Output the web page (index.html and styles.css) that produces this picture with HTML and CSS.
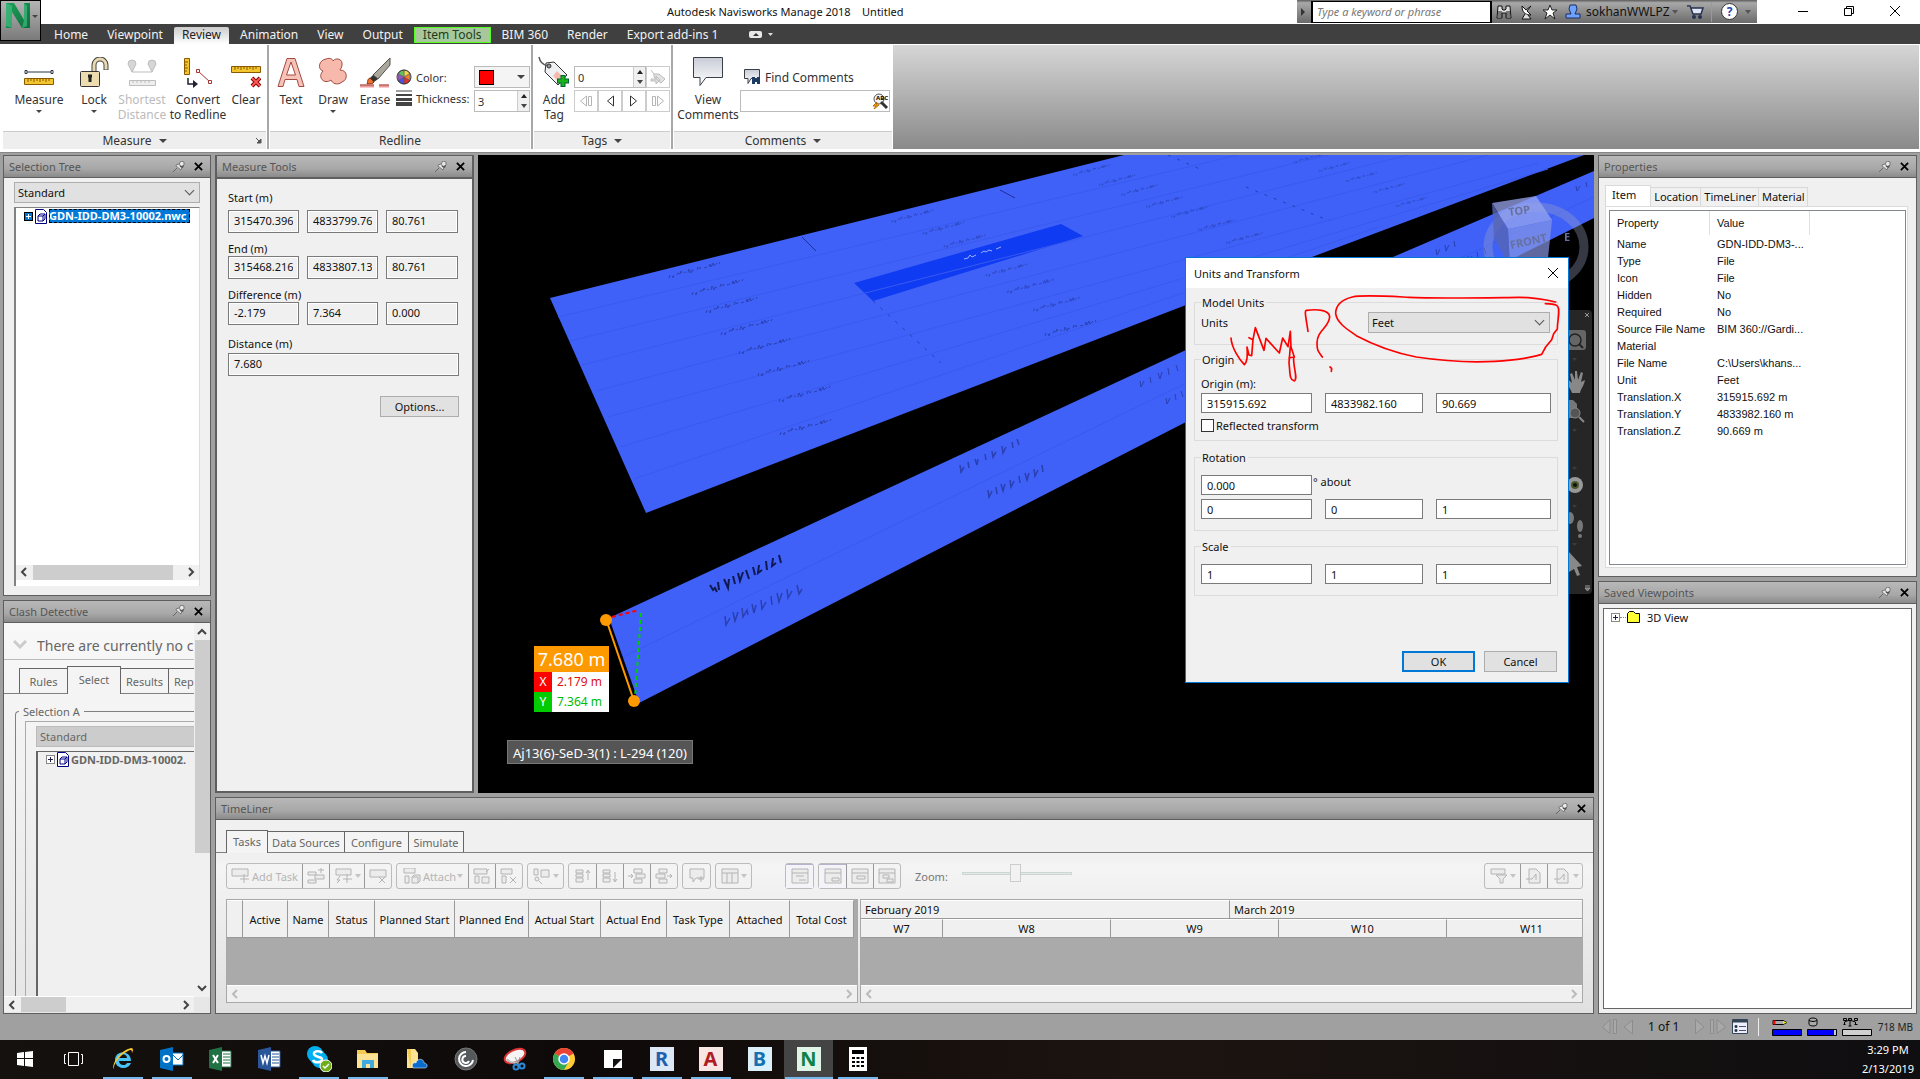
FILE: index.html
```html
<!DOCTYPE html>
<html lang="en">
<head>
<meta charset="utf-8">
<title>Autodesk Navisworks Manage 2018</title>
<link rel="stylesheet" href="styles.css">
</head>
<body>
<svg class="defs" aria-hidden="true">
  <defs>
    <linearGradient id="nGreen" x1="0" y1="0" x2="1" y2="1"><stop offset="0" stop-color="#1fa35a"/><stop offset="1" stop-color="#0b6e3c"/></linearGradient>
    <linearGradient id="bubble" x1="0" y1="0" x2="0" y2="1"><stop offset="0" stop-color="#c8ccd6"/><stop offset="1" stop-color="#fff"/></linearGradient>
  </defs>
  <symbol id="pin" viewBox="0 0 12 12"><path d="M0 11l4-4" stroke="#666" fill="none"/><path d="M3 5l5 4 1-3 2-2V1L8 0 6 3 3 4z" fill="#e8e8e8" stroke="#777"/><path d="M6 2l1 4 3 1 1-3-3 1z" fill="#555"/></symbol>
  <symbol id="cross" viewBox="0 0 10 10"><path d="M1 1l8 8M9 1l-8 8" stroke="#000" stroke-width="2" fill="none"/></symbol>
  <symbol id="nwc" viewBox="0 0 12 15"><path d="M.5.5h8l3 3v11H.5z" fill="#fff" stroke="#000080"/><path d="M3 7h5v5H3zM3 7l2-2h5v5l-2 2M8 7l2-2" fill="none" stroke="#000080"/></symbol>
  <symbol id="ruler" viewBox="0 0 30 8"><path d="M.5.5h29v6H.5z" fill="#f3c52f" stroke="#8a5a00"/><path d="M4 1v3M7 1v2M10 1v3M13 1v2M16 1v3M19 1v2M22 1v3M25 1v2" stroke="#8a5a00"/></symbol>
  <symbol id="less" viewBox="0 0 8 10"><path d="M6 1L2 5l4 4" fill="none" stroke="currentColor" stroke-width="2"/></symbol>
  <symbol id="more" viewBox="0 0 8 10"><path d="M2 1l4 4-4 4" fill="none" stroke="currentColor" stroke-width="2"/></symbol>
  <symbol id="scrawl" viewBox="-30 -10 60 20" overflow="visible"><path d="M-25 8l1-3M-22 6l1 2 1-3M-17 5l1-2 2 1 1-3 1 2M-10 3l2-1M-6 3l1-4 2 4 1-3 2 1M3 0l1-3 2 2 1-2M10-2l3-1M15-3l1-3 1 3 2-4 1 3 3-3M25-6l1-2" fill="none" stroke="#24379c" stroke-width="1"/></symbol>
</svg>

<div class="app">
  <header class="titlebar">
    <h1 class="window-title">Autodesk Navisworks Manage 2018 &nbsp;&nbsp; Untitled</h1>
    <div class="infocenter">
      <span class="tri-right"></span>
      <input class="keyword" type="text" aria-label="Search" placeholder="Type a keyword or phrase">
      <svg width="16" height="16" viewBox="0 0 16 16"><path d="M2 2h4v3l1 1h2l1-1V2h4l1 12h-5V9H6v5H1z" fill="#ddd" stroke="#111"/><path d="M3 7v6M5 7v6M11 7v6M13 7v6" stroke="#111"/></svg>
      <svg width="16" height="16" viewBox="0 0 16 16"><path d="M3 2c0 6 3 9 9 9L8 7l4-5-5 4z" fill="#fff" stroke="#111"/><path d="M6 10l-3 5h9l-3-4" fill="#ddd" stroke="#111"/></svg>
      <svg width="16" height="16" viewBox="0 0 16 16"><path d="M8 1l2 5h5l-4 3 2 6-5-4-5 4 2-6-4-3h5z" fill="#fff" stroke="#222"/></svg>
      <svg width="16" height="16" viewBox="0 0 16 16"><path d="M5 1h6l1 4-2 5h5v4H1v-4h5L4 5z" fill="#6ea2ff" stroke="#1b2f66"/></svg>
      <a class="user" href="#">sokhanWWLPZ</a>
      <span class="tri-down dim"></span>
      <svg class="cart" width="17" height="16" viewBox="0 0 17 16"><path d="M0 2h3l3 8h8l2-6H4" fill="#dfe6f5" stroke="#26324f" stroke-width="1.5"/><circle cx="7" cy="13" r="2" fill="#26324f"/><circle cx="13" cy="13" r="2" fill="#26324f"/></svg>
      <span class="rule"></span>
      <button class="help" type="button">?</button>
      <span class="tri-down dim"></span>
    </div>
    <div class="window-buttons">
      <button type="button" aria-label="Minimize"><svg width="12" height="12"><path d="M1 6.500h10" stroke="#000"/></svg></button>
      <button type="button" aria-label="Restore"><svg width="12" height="12"><path d="M1.500 3.500h7v7h-7zM3.500 3V1.500h7v7H9" fill="none" stroke="#000"/></svg></button>
      <button type="button" aria-label="Close"><svg width="12" height="12"><path d="M1 1l10 10M11 1L1 11" stroke="#000"/></svg></button>
    </div>
  </header>

  <button class="app-button" type="button" aria-label="Application menu">
    <svg width="26" height="28" viewBox="0 0 26 28"><path d="M1 1h8l10 17V1h6v25h-8L7 10v16H1z" fill="url(#nGreen)"/><path d="M1 1l6 3v22l-6-2zM19 1l3 3v20l-5 2 2-8z" fill="#4cc38a" opacity=".6"/></svg>
    <span class="tri-down small"></span>
  </button>

  <nav class="tabs">
    <a href="#">Home</a><a href="#">Viewpoint</a><a class="active" href="#">Review</a><a href="#">Animation</a><a href="#">View</a><a href="#">Output</a><a class="context" href="#">Item Tools</a><a href="#">BIM 360</a><a href="#">Render</a><a href="#">Export add-ins 1</a>
    <svg class="collapse" width="26" height="8" viewBox="0 0 26 8"><rect width="13" height="7" rx="2" fill="#e8e8e8"/><path d="M4 5l3-3 3 3z" fill="#333"/><path d="M19 2h5l-2.500 3z" fill="#ddd"/></svg>
  </nav>

  <section class="ribbon">
    <div class="group g-measure">
      <div class="tools">
        <button class="tool w62" type="button"><svg width="30" height="32" viewBox="0 0 30 32"><path d="M2 15h26" stroke="#2b3440"/><path d="M1 13.500h2v3H1zM27 13.500h2v3h-2z" fill="#fff" stroke="#2b3440"/><use href="#ruler" y="21" width="30" height="8"/></svg><span>Measure</span><i class="tri-down small"></i></button>
        <button class="tool w48" type="button"><svg width="30" height="32" viewBox="0 0 30 32"><path d="M15 14V8a6 6 0 0 1 12 0v5" fill="none" stroke="#444" stroke-width="5"/><path d="M15 14V8a6 6 0 0 1 12 0v4.500" fill="none" stroke="#e8d9b0" stroke-width="3"/><rect x="1.500" y="14.500" width="19" height="15" rx="1" fill="#ecdcae" stroke="#333"/><path d="M9 19h4M11 19v6" stroke="#222" stroke-width="3"/></svg><span>Lock</span><i class="tri-down small"></i></button>
        <button class="tool w48" type="button" disabled><svg width="30" height="32" viewBox="0 0 30 32"><g fill="#d6d6d6" stroke="#bdbdbd"><path d="M5 15L1 7a4 4 0 0 1 8 0zM25 15l-4-8a4 4 0 0 1 8 0z"/><path d="M5 15h20"/><path d="M2.500 23.500h26v5h-26z" fill="#eee"/><path d="M6 24v2M10 24v2M14 24v2M18 24v2M22 24v2"/></g></svg><span>Shortest<br>Distance</span></button>
        <button class="tool w64" type="button"><svg width="30" height="32" viewBox="0 0 30 32"><path d="M1.500 1.500h5v16h-5z" fill="#f3c52f" stroke="#8a5a00"/><path d="M2 5h3M2 8h2M2 11h3M2 14h2" stroke="#8a5a00"/><path d="M5 21v6h6" fill="none" stroke="#223" stroke-width="1.500"/><path d="M10 23l5 4-5 4z" fill="#223"/><path d="M15 14l12 11" stroke="#a33"/><path d="M13.500 12.500h3v3h-3zM25.500 23.500h3v3h-3z" fill="#fff" stroke="#a33"/></svg><span>Convert<br>to Redline</span></button>
        <button class="tool w32" type="button"><svg width="30" height="32" viewBox="0 0 30 32"><use href="#ruler" y="9" width="30" height="8"/><path d="M21 21l8 8M29 21l-8 8" stroke="#7a0000" stroke-width="4"/><path d="M21 21l8 8M29 21l-8 8" stroke="#f55" stroke-width="2"/></svg><span>Clear</span></button>
      </div>
      <h2 class="caption">Measure<i class="tri-down"></i><svg class="launcher" width="7" height="7"><path d="M1 1l4 4M6 2v4H2z" stroke="#555" fill="#555"/></svg></h2>
    </div>
    <div class="group g-redline">
      <div class="tools">
        <button class="tool w42" type="button"><svg width="28" height="32" viewBox="0 0 28 32"><path fill-rule="evenodd" d="M1 29.500L10 1.500h8l9 28h-5l-2-7H8l-2 7zM9.500 18h9L14 5z" fill="#f7c3b8" stroke="#a24b43"/></svg><span>Text</span></button>
        <button class="tool w42" type="button"><svg width="30" height="32" viewBox="0 0 30 32"><path d="M8 2c5-2 7 1 7 2 3-4 10-2 9 4 0 3-2 4-2 5 8 0 8 10 2 12-5 4-10 1-11-2-7 5-14-3-8-9C-1 12 1 3 8 2z" fill="#f7b9ac" stroke="#a24b43"/></svg><span>Draw</span><i class="tri-down small"></i></button>
        <button class="tool w42" type="button"><svg width="32" height="32" viewBox="0 0 32 32"><path d="M31 1L14 18l5 4L31 8z" fill="#aaa79c" stroke="#55524c"/><path d="M14 18l-3 3 4 4 4-3z" fill="#333"/><path d="M11 21c-3 1-2 4-3 6 3 0 6 0 7-2z" fill="#f0702c" stroke="#7a3010"/><path d="M1 29h14M20 29h10" stroke="#e99" stroke-width="3"/><path d="M1 28h14M20 28h10" stroke="#a24b43"/></svg><span>Erase</span></button>
        <div class="redline-form">
          <label for="rl-color"><svg width="16" height="16" viewBox="-8 -8 16 16"><g stroke="#555" stroke-width=".5"><path d="M0 0V-7A7 7 0 0 1 6-3.500z" fill="#f4d94a"/><path d="M0 0l6-3.500v7z" fill="#f08030"/><path d="M0 0l6 3.500A7 7 0 0 1 0 7z" fill="#e03030"/><path d="M0 0v7a7 7 0 0 1-6-3.500z" fill="#5050e0"/><path d="M0 0l-6 3.500v-7z" fill="#a050c0"/><path d="M0 0l-6-3.500A7 7 0 0 1 0-7z" fill="#60c060"/></g><circle r="7" fill="none" stroke="#333"/></svg>Color:</label>
          <button id="rl-color" class="swatch" type="button" aria-label="Red"><b></b><i class="tri-down"></i></button>
          <label class="thick" for="rl-thick"><svg width="16" height="16"><path d="M0 1h16" stroke="#444"/><path d="M0 5h16" stroke="#444" stroke-width="2"/><path d="M0 9.500h16" stroke="#444" stroke-width="3"/><path d="M0 14h16" stroke="#444" stroke-width="4"/></svg>Thickness:</label>
          <span class="spin"><input id="rl-thick" type="text" value="3"><span class="spin-arrows"><i class="tri-up"></i><i class="tri-down"></i></span></span>
        </div>
      </div>
      <h2 class="caption">Redline</h2>
    </div>
    <div class="group g-tags">
      <div class="tools">
        <button class="tool w42" type="button"><svg width="32" height="32" viewBox="0 0 32 32"><path d="M8 6l8-1 13 13-9 10L7 15z" fill="#eef0f4" stroke="#333"/><path d="M19 14l5 5-4 5-5-5z" fill="#f7b9ac"/><circle cx="11" cy="9" r="2" fill="#999" stroke="#333"/><path d="M1 0c1 6 4 8 9 9" fill="none" stroke="#555" stroke-width="1.500"/><path d="M25 18v12M19 24h12" stroke="#063" stroke-width="5"/><path d="M25 19v10M20 24h10" stroke="#1bb31b" stroke-width="3"/></svg><span>Add<br>Tag</span></button>
        <div class="tag-form">
          <span class="spin tagnum"><input type="text" value="0" aria-label="Tag number"><span class="spin-arrows"><i class="tri-up"></i><i class="tri-down"></i></span></span>
          <button type="button" disabled aria-label="Go to tag"><svg width="16" height="16" viewBox="0 0 16 16"><path d="M4 5h5l6 5-4 4-7-6zM1 1l3 4M1 10h5V7l4 4-4 4v-3H1z" fill="#e2e2e2" stroke="#bbb"/></svg></button>
          <button type="button" disabled aria-label="First tag"><svg width="14" height="12"><path d="M7.500 1v10l-6-5zM9.500 1.500h3v9h-3z" fill="#fff" stroke="#b5b5b5"/></svg></button>
          <button type="button" aria-label="Previous tag"><svg width="10" height="12"><path d="M8.500 1v10l-6-5z" fill="#fff" stroke="#333"/></svg></button>
          <button type="button" aria-label="Next tag"><svg width="10" height="12"><path d="M1.500 1v10l6-5z" fill="#fff" stroke="#333"/></svg></button>
          <button type="button" disabled aria-label="Last tag"><svg width="14" height="12"><path d="M6.500 1v10l6-5zM1.500 1.500h3v9h-3z" fill="#fff" stroke="#b5b5b5"/></svg></button>
        </div>
      </div>
      <h2 class="caption">Tags<i class="tri-down"></i></h2>
    </div>
    <div class="group g-comments">
      <div class="tools">
        <button class="tool w64" type="button"><svg width="32" height="32" viewBox="0 0 32 32"><path d="M1.500.500h29v20H14l-6 8v-8H1.500z" fill="url(#bubble)" stroke="#3a3f4a"/></svg><span>View<br>Comments</span></button>
        <div class="comment-form">
          <button class="find" type="button"><svg width="17" height="17" viewBox="0 0 17 17"><path d="M.5.500h15v9H7l-3 5v-5H.5z" fill="url(#bubble)" stroke="#3a3f4a"/><path d="M8 8h3v2h2V8h3v7h-3v-2h-2v2H8z" fill="#1c3c66"/></svg>Find Comments</button>
          <div class="quick"><input type="text" aria-label="Quick find comments"><svg width="17" height="17" viewBox="0 0 17 17"><circle cx="7" cy="6" r="5" fill="#f4f4f4" stroke="#555"/><path d="M9 9l6 6" stroke="#333" stroke-width="3"/><path d="M5 9l-4 4h3l-2 3 5-4H4z" fill="#fb1" stroke="#b60"/><text x="4" y="7" class="abc">ABC</text></svg></div>
        </div>
      </div>
      <h2 class="caption">Comments<i class="tri-down"></i></h2>
    </div>
    <div class="ribbon-fill"></div>
  </section>

  <main class="workspace">
    <div class="dock dock-left">
      <section class="panel selection">
        <header class="panel-head"><h2>Selection Tree</h2><svg class="pin"><use href="#pin"/></svg><button type="button" aria-label="Close"><svg><use href="#cross"/></svg></button></header>
        <div class="panel-body selection-body">
          <span class="select"><select aria-label="Tree view"><option>Standard</option></select></span>
          <div class="tree">
            <ul><li class="picked"><span class="plus on"></span><svg width="12" height="15"><use href="#nwc"/></svg><span class="node">GDN-IDD-DM3-10002.nwc</span></li></ul>
            <div class="hscroll"><svg><use href="#less"/></svg><span class="track"><b class="thumb-tree"></b></span><svg><use href="#more"/></svg></div>
          </div>
        </div>
      </section>
      <section class="panel clash">
        <header class="panel-head"><h2>Clash Detective</h2><svg class="pin"><use href="#pin"/></svg><button type="button" aria-label="Close"><svg><use href="#cross"/></svg></button></header>
        <div class="panel-body clash-body">
          <div class="clash-view">
            <p class="notice"><svg width="14" height="10"><path d="M1 1l6 6 6-6" fill="none" stroke="#ccc" stroke-width="3"/></svg><span>There are currently no c</span></p>
            <div class="boxtabs clash-tabs"><a href="#" class="w49">Rules</a><a href="#" class="w54 active">Select</a><a href="#" class="w49">Results</a><a href="#" class="w49 cut">Rep</a></div>
            <fieldset class="selection-a"><legend>Selection A</legend>
              <div class="inner"><div class="bar">Standard</div>
                <ul class="clash-tree"><li><span class="plus"></span><svg width="12" height="15"><use href="#nwc"/></svg><span class="node">GDN-IDD-DM3-10002.</span></li></ul>
              </div>
            </fieldset>
          </div>
          <div class="vscroll"><svg class="up"><use href="#less"/></svg><span class="track"><b></b></span><svg class="down"><use href="#less"/></svg></div>
          <div class="hscroll"><svg><use href="#less"/></svg><span class="track"><b class="thumb-clash"></b></span><svg><use href="#more"/></svg></div>
        </div>
      </section>
    </div>

    <div class="center">
      <section class="panel measure">
        <header class="panel-head"><h2>Measure Tools</h2><svg class="pin"><use href="#pin"/></svg><button type="button" aria-label="Close"><svg><use href="#cross"/></svg></button></header>
        <form class="panel-body measure-body">
          <fieldset class="row3 first"><legend>Start (m)</legend><input aria-label="Start X" value="315470.396" readonly><input aria-label="Start Y" value="4833799.760" readonly><input aria-label="Start Z" value="80.761" readonly></fieldset>
          <fieldset class="row3"><legend>End (m)</legend><input aria-label="End X" value="315468.216" readonly><input aria-label="End Y" value="4833807.13" readonly><input aria-label="End Z" value="80.761" readonly></fieldset>
          <fieldset class="row3"><legend>Difference (m)</legend><input aria-label="Difference X" value="-2.179" readonly><input aria-label="Difference Y" value="7.364" readonly><input aria-label="Difference Z" value="0.000" readonly></fieldset>
          <label class="distance">Distance (m)<input value="7.680" readonly></label>
          <button class="push" type="button">Options...</button>
        </form>
      </section>

      <section class="viewport">
        <svg class="scene" viewBox="0 0 1116 638" preserveAspectRatio="xMinYMin slice">
          <path d="M72 143L646 0h460L834 102 708 150 168 358z" fill="#3f61f8"/>
          <path d="M131 463L708 195 915 102 1116 16v47L708 267 161 548z" fill="#3f61f8"/>
          <path d="M376 128l207-59 22 12-210 65z" fill="#0f3bf2"/>
          <g fill="none" stroke="#3a5aee" stroke-width="1">
            <path d="M80 162L760 0M92 186L850 0M104 210L930 0M118 236L1010 0M130 262L1060 8M142 292L1070 14M156 324L900 72"/>
            <path d="M145 502L708 228 1116 42"/>
          </g>
          <g fill="none" stroke="#1d2f9a" stroke-dasharray="3 7"><path d="M395 146l68 62M690 0l34 15M768 32l84 34" opacity=".7"/><path d="M324 82l14 14M522 35l15 8" stroke-dasharray="none"/></g>
          <g opacity=".7">
            <use href="#scrawl" x="186" y="105" width="60" height="20"/><use href="#scrawl" x="209" y="122" width="60" height="20"/><use href="#scrawl" x="223" y="140" width="60" height="20"/><use href="#scrawl" x="238" y="162" width="60" height="20"/><use href="#scrawl" x="256" y="181" width="60" height="20"/><use href="#scrawl" x="275" y="203" width="60" height="20"/><use href="#scrawl" x="296" y="229" width="60" height="20"/><use href="#scrawl" x="297" y="262" width="60" height="20"/>
            <use href="#scrawl" x="410" y="53" width="48" height="16"/><use href="#scrawl" x="441" y="65" width="48" height="16"/><use href="#scrawl" x="462" y="78" width="48" height="16"/><use href="#scrawl" x="504" y="107" width="48" height="16"/><use href="#scrawl" x="525" y="122" width="54" height="18"/><use href="#scrawl" x="551" y="140" width="54" height="18"/><use href="#scrawl" x="562" y="163" width="60" height="20"/>
            <use href="#scrawl" x="592" y="8" width="42" height="14"/><use href="#scrawl" x="618" y="18" width="42" height="14"/><use href="#scrawl" x="640" y="28" width="42" height="14"/><use href="#scrawl" x="665" y="40" width="42" height="14"/><use href="#scrawl" x="690" y="50" width="42" height="14"/><use href="#scrawl" x="717" y="63" width="42" height="14"/><use href="#scrawl" x="745" y="76" width="42" height="14"/>
            <use href="#scrawl" x="813" y="-3" width="36" height="12"/><use href="#scrawl" x="838" y="6" width="36" height="12"/><use href="#scrawl" x="865" y="16" width="36" height="12"/><use href="#scrawl" x="893" y="27" width="36" height="12"/><use href="#scrawl" x="915" y="41" width="36" height="12"/>
          </g>
          <path d="M486 104l4-1 2-3 2 2 4-2M503 98l3-2 2 1 3-2 3 1M518 94l5-2" fill="none" stroke="#9db0ff"/>
          <g fill="none" stroke="#2a3fb0">
            <path d="M232 430l3 5 2-2 2 4M240 427l1 8M246 424l4 9 1-9M255 421l2 8M260 418l2 8 3-9M268 415l3 9M275 412l2 8M281 410l-1 8 4-3M288 406l1 9M295 403l-1 8 4-3M301 400l2 8" stroke="#101a52" stroke-width="2"/>
            <path d="M247 461l1 9 4-7M255 457l2 9 3-9M264 453l1 9 4-7 1 5M274 449l2 9 2-8M283 445l1 9 4-7M293 441l1 9M299 438l2 9 3-9M309 434l1 9 4-7M319 430l2 9 3-5" stroke-width="1.500"/>
            <path d="M482 310l1 7 3-5M490 307l1 6M497 304l2 6 1-6M507 299l1 6M514 296l1 6 3-5M524 291l1 7 3-6M534 287l1 6M539 284l2 6" stroke-width="1.500"/>
            <path d="M510 335l1 7 3-6M518 332l1 7M523 329l2 7 2-7M532 325l1 7 3-6M541 321l1 7M547 318l2 7 2-7M556 314l1 7 3-6M564 310l1 7" stroke-width="1.500"/>
            <path d="M662 226l1 6 3-6M672 222l1 6M680 218l2 6 2-7M690 213l1 7M698 210l2 6M688 243l1 6 3-6M697 239l1 6M703 236l2 6M958 94l1 6 3-6M967 90l1 6 3-6M976 86l1 6M990 101l1 6 3-6M999 97l1 6M1006 93l2 6M1098 31l1 5 3-5M1108 27l1 5"/>
          </g>
          <g>
            <ellipse cx="1058" cy="92" rx="48" ry="40" fill="none" stroke="#9aa2c4" stroke-width="9" opacity=".35"/>
            <path d="M1014 48l44-7 16 24-44 9z" fill="#98a6ee" opacity=".75"/>
            <path d="M1030 74l44-9-4 38-38 8z" fill="#8795e4" opacity=".7"/>
            <path d="M1014 48l16 26 2 37-16-28z" fill="#5865b4" opacity=".8"/>
            <g class="cube-text"><text x="1031" y="61" transform="rotate(-8 1031 61)">TOP</text><text x="1033" y="94" transform="rotate(-12 1033 94)">FRONT</text><text x="1086" y="86">E</text></g>
          </g>
          <path d="M128 464l28 82" stroke="#f90" stroke-width="2"/>
          <path d="M134 462l27-7" stroke="#f00" stroke-width="2" stroke-dasharray="4 3"/>
          <path d="M163 458l-6 84" stroke="#0c0" stroke-width="2" stroke-dasharray="4 3"/>
          <circle cx="128" cy="465" r="6" fill="#f90"/><circle cx="156" cy="546" r="6" fill="#f90"/>
        </svg>
        <dl class="reading"><dt class="total">7.680 m</dt><dd><b class="x">X</b><span>2.179 m</span></dd><dd class="green"><b class="y">Y</b><span>7.364 m</span></dd></dl>
        <p class="tooltip">Aj13(6)-SeD-3(1) : L-294 (120)</p>
        <div class="navbar">
          <svg width="54" height="284" viewBox="0 0 54 284"><g fill="#777"><path d="M47 3l4 4M51 3l-4 4" stroke="#999"/><rect x="26" y="20" width="22" height="20" rx="3" fill="#666"/><circle cx="37" cy="30" r="6" fill="#666" stroke="#222" stroke-width="1.500"/><path d="M41 34l4 4" stroke="#222" stroke-width="2"/><path d="M29 68l5 5-2-9 2-1 3 7V61h2l1 9 3-8 2 1-2 9 4-2c-1 6-4 8-5 13h-8c-2-6-6-9-7-12z" fill="#888"/><path d="M26 90h9l4 4v14H26z"/><circle cx="37" cy="103" r="5" fill="#555" stroke="#888"/><path d="M41 107l5 5" stroke="#888" stroke-width="2"/><circle cx="37" cy="175" r="8" fill="#999"/><circle cx="37" cy="175" r="4" fill="#4a5a30"/><circle cx="37" cy="175" r="2" fill="#111"/><ellipse cx="32" cy="208" rx="4" ry="6"/><ellipse cx="42" cy="216" rx="3" ry="6"/><circle cx="42" cy="226" r="2"/><path d="M31 242l13 14-5 1 3 8-3 1-3-7-5 3z" fill="#888"/><path d="M47 276h5M47 278h5l-2.500 3z" stroke="#999"/><path d="M34 48h5l-2.500 3zM34 119h5l-2.500 3zM34 157h5l-2.500 3zM34 195h5l-2.500 3zM34 233h5l-2.500 3z" fill="#3c3c3c"/></g></svg>
        </div>

        <div class="dialog" role="dialog" aria-label="Units and Transform">
          <header class="dialog-head"><h2>Units and Transform</h2><button type="button" aria-label="Close"><svg width="12" height="12"><path d="M1 1l10 10M11 1L1 11" stroke="#000"/></svg></button></header>
          <form class="dialog-body">
            <fieldset class="box units"><legend>Model Units</legend><label for="units">Units</label><span class="select"><select id="units"><option>Feet</option></select></span></fieldset>
            <fieldset class="box origin"><legend>Origin</legend>
              <p class="line">Origin (m):</p>
              <div class="trio"><input aria-label="Origin X" value="315915.692"><input aria-label="Origin Y" value="4833982.160"><input aria-label="Origin Z" value="90.669"></div>
              <label class="check"><input type="checkbox">Reflected transform</label>
            </fieldset>
            <fieldset class="box rotation"><legend>Rotation</legend>
              <label class="angle"><input value="0.000">° about</label>
              <div class="trio"><input aria-label="Axis X" value="0"><input aria-label="Axis Y" value="0"><input aria-label="Axis Z" value="1"></div>
            </fieldset>
            <fieldset class="box scale"><legend>Scale</legend>
              <div class="trio"><input aria-label="Scale X" value="1"><input aria-label="Scale Y" value="1"><input aria-label="Scale Z" value="1"></div>
            </fieldset>
            <div class="dialog-actions"><button class="push primary" type="button">OK</button><button class="push" type="button">Cancel</button></div>
          </form>
          <svg class="ink" width="384" height="426" viewBox="46 22 1152 1278"><g fill="none" stroke="#f00" stroke-width="5" stroke-linejoin="round" stroke-linecap="round"><path d="M184 265c2 30 25 65 40 80 10-8 10-30 8-53l6 24 8 2 4-48-12-6M250 270l7-36 26 68 6-36 40 44 10-45 16 26 7-46 2 47 10 30M362 290l-4 50c4 30 0 50 16 54 12-6-4-40-2-72l-14 3"/><path d="M415 245c-6-40-12-64-4-63 30-4 66-2 69 18 0 34-38 40-38 80 0 25 4 25 16 42M481 352l5 4-1 9"/><path d="M1158 157c-40-10-70-14-110-14-150 2-250 4-330 0-60-3-140-8-170-1-40 10-50 30-50 50 4 30 40 50 62 66 60 32 120 52 180 64 80 12 140 16 210 14 70-2 120-8 166-22l12-22 18-22 6-18 11-14c0-24 6-40 4-60-2-12-6-14-40-16"/></g></svg>
        </div>
      </section>

      <section class="panel timeliner">
        <header class="panel-head"><h2>TimeLiner</h2><svg class="pin"><use href="#pin"/></svg><button type="button" aria-label="Close"><svg><use href="#cross"/></svg></button></header>
        <div class="panel-body timeliner-body">
          <div class="boxtabs tl-tabs"><a href="#" class="w42 active">Tasks</a><a href="#" class="w78">Data Sources</a><a href="#" class="w65">Configure</a><a href="#" class="w56">Simulate</a></div>
          <div class="toolbar">
            <div class="btns"><button class="w75"><svg viewBox="0 0 20 16"><path d="M1 1h16v7H1zM13 6v9M9 11h9"/></svg>Add Task</button><button class="w27"><svg viewBox="0 0 20 16"><path d="M2 4h8v3H2zM9 7h9v4H9zM2 12h8v3H2zM15 0v5M12 2h6"/></svg></button><button class="w35"><svg viewBox="0 0 20 16"><path d="M2 1h15v6H2zM13 6v9M9 11h9M6 8l-3 4h3l-3 3"/></svg><i class="tri-down dim"></i></button><button class="w27"><svg viewBox="0 0 20 16"><path d="M2 2h16v7H2zM11 9l6 6M17 9l-6 6"/></svg></button></div>
            <div class="btns"><button class="w71"><svg viewBox="0 0 20 16"><path d="M2 0h11v5H2zM3 8h4v7H3zM10 9l2-2h6v6l-2 2h-6zM10 9h6v6"/></svg>Attach<i class="tri-down dim"></i></button><button class="w27"><svg viewBox="0 0 20 16"><path d="M2 1h13v5H2zM3 8h4v7H3zM10 9h7v6h-7zM14 4l3-3"/></svg></button><button class="w27"><svg viewBox="0 0 20 16"><path d="M2 1h11v5H2zM3 8h4v7H3zM11 9l6 6M17 9l-6 6"/></svg></button></div>
            <div class="btns"><button class="w35"><svg viewBox="0 0 20 16"><path d="M2 1h4v6H2zM9 2h8v7H9z"/><circle cx="5" cy="11" r="2"/><path d="M7 13l3 3"/></svg><i class="tri-down dim"></i></button></div>
            <div class="btns"><button class="w27"><svg viewBox="0 0 20 16"><path d="M3 2h7v3H3zM3 6h7v3H3zM3 10h7v4H3zM15 12V3M13 5l2-3 2 3"/></svg></button><button class="w27"><svg viewBox="0 0 20 16"><path d="M3 2h7v3H3zM3 6h7v3H3zM3 10h7v4H3zM15 4v9M13 11l2 3 2-3"/></svg></button><button class="w27"><svg viewBox="0 0 20 16"><path d="M7 1h8v4H7zM9 6h9v4H9zM7 11h8v4H7zM1 8h5M4 6l2 2-2 2"/></svg></button><button class="w27"><svg viewBox="0 0 20 16"><path d="M5 1h8v4H5zM2 6h9v4H2zM5 11h8v4H5zM13 8h5M16 6l2 2-2 2"/></svg></button></div>
            <div class="btns"><button class="w27"><svg viewBox="0 0 20 16"><path d="M3 1h14v9H9l-3 4v-4H3zM14 8v6M11 11h6"/></svg></button></div>
            <div class="btns"><button class="w35"><svg viewBox="0 0 20 16"><path d="M2 1h16v14H2zM2 5h16M7 5v10M12 5v10"/></svg><i class="tri-down dim"></i></button></div>
            <div class="btns lead"><button class="w27 lit"><svg viewBox="0 0 20 16"><path d="M2 1h16v14H2zM2 5h16M6 8h8M9 12h7"/></svg></button></div>
            <div class="btns"><button class="w27 lit"><svg viewBox="0 0 20 16"><path d="M2 1h16v14H2zM2 5h16M9 10h7v3H9z"/></svg></button><button class="w27"><svg viewBox="0 0 20 16"><path d="M2 1h16v14H2zM2 5h16M7 8h8v3H7z"/></svg></button><button class="w27"><svg viewBox="0 0 20 16"><path d="M2 1h16v14H2zM2 5h16M6 7h6v3H6zM10 11h6v3h-6z"/></svg></button></div>
            <label class="zoom">Zoom:<input type="range" min="0" max="100" value="49" disabled></label>
            <div class="btns end"><button class="w35"><svg viewBox="0 0 20 16"><path d="M2 1h14v5H2zM7 7h11l-4 4v4h-3v-4z"/></svg><i class="tri-down dim"></i></button><button class="w27"><svg viewBox="0 0 20 16"><path d="M5 1h7l4 4v10H5zM2 11h6l4-5v6"/></svg></button><button class="w35"><svg viewBox="0 0 20 16"><path d="M5 1h7l4 4v10H5zM2 11h6l4-5v6"/></svg><i class="tri-down dim"></i></button></div>
          </div>
          <div class="split">
            <div class="pane tasks">
              <table><colgroup><col class="c16"><col class="c45"><col class="c41"><col class="c46"><col class="c80"><col class="c74"><col class="c72"><col class="c66"><col class="c63"><col class="c60"><col class="c64"></colgroup><thead><tr><th></th><th>Active</th><th>Name</th><th>Status</th><th>Planned Start</th><th>Planned End</th><th>Actual Start</th><th>Actual End</th><th>Task Type</th><th>Attached</th><th>Total Cost</th></tr></thead></table>
              <div class="void"></div>
              <div class="hscroll off"><svg><use href="#less"/></svg><span class="track"></span><svg><use href="#more"/></svg></div>
            </div>
            <div class="pane gantt">
              <table><colgroup><col class="c81"><col class="c168"><col class="c119"><col class="c49"><col class="c168"><col></colgroup><thead><tr class="months"><th colspan="3">February 2019</th><th colspan="3">March 2019</th></tr><tr class="weeks"><th>W7</th><th>W8</th><th colspan="2">W9</th><th>W10</th><th class="last">W11</th></tr></thead></table>
              <div class="void"></div>
              <div class="hscroll off"><svg><use href="#less"/></svg><span class="track"></span><svg><use href="#more"/></svg></div>
            </div>
          </div>
        </div>
      </section>
    </div>

    <div class="dock dock-right">
      <section class="panel properties">
        <header class="panel-head"><h2>Properties</h2><svg class="pin"><use href="#pin"/></svg><button type="button" aria-label="Close"><svg><use href="#cross"/></svg></button></header>
        <div class="panel-body properties-body">
          <div class="proptabs"><a href="#" class="active">Item</a><a href="#">Location</a><a href="#">TimeLiner</a><a href="#">Material</a></div>
          <div class="sheet"><div class="list">
            <table><colgroup><col class="c100"><col class="c100"><col></colgroup><thead><tr><th>Property</th><th>Value</th><th></th></tr></thead>
            <tbody><tr><td>Name</td><td>GDN-IDD-DM3-...</td></tr><tr><td>Type</td><td>File</td></tr><tr><td>Icon</td><td>File</td></tr><tr><td>Hidden</td><td>No</td></tr><tr><td>Required</td><td>No</td></tr><tr><td>Source File Name</td><td>BIM 360://Gardi...</td></tr><tr><td>Material</td><td></td></tr><tr><td>File Name</td><td>C:\Users\khans...</td></tr><tr><td>Unit</td><td>Feet</td></tr><tr><td>Translation.X</td><td>315915.692 m</td></tr><tr><td>Translation.Y</td><td>4833982.160 m</td></tr><tr><td>Translation.Z</td><td>90.669 m</td></tr></tbody></table>
          </div></div>
        </div>
      </section>
      <section class="panel saved">
        <header class="panel-head"><h2>Saved Viewpoints</h2><svg class="pin"><use href="#pin"/></svg><button type="button" aria-label="Close"><svg><use href="#cross"/></svg></button></header>
        <div class="panel-body saved-body"><ul class="views"><li><span class="plus"></span><span class="dots"></span><svg width="15" height="13"><path d="M1.500 11.500v-9l2-2h4l2 2h4v9z" fill="#ff3" stroke="#000"/></svg><span>3D View</span></li></ul></div>
      </section>
    </div>
  </main>

  <footer class="statusbar">
    <svg width="33" height="18"><g fill="#a8a8a8" stroke="#8c8c8c"><path d="M9 1.500v14L1.500 9zM12.500 1.500h3v14h-3zM31.500 2v14L23 9z"/></g></svg>
    <span class="pages">1 of 1</span>
    <svg width="33" height="18"><g fill="#a8a8a8" stroke="#8c8c8c"><path d="M1.500 1.500v14L10 9zM16.500 1.500h3v14h-3zM23 1.500v14L31.500 9z"/></g></svg>
    <svg width="16" height="16"><path d="M.5.500h15v14H.5z" fill="#eef" stroke="#345"/><path d="M1 2h14" stroke="#345" stroke-width="3"/><path d="M3 6.500h2v2H3zM3 10.500h2v2H3zM7 7.500h7M7 11.500h7" stroke="#456"/></svg>
    <span class="rule"></span>
    <svg width="30" height="20"><path d="M1 3.500h10l4 2-4 2H1z" fill="#aaa" stroke="#000"/><path d="M1.500 3.500h2v4h-2z" fill="#f00"/><path d="M11 4l4 1.500-4 1.500z" fill="#ee0"/><path d="M.5 12.500h29v6H.5z" fill="#00f" stroke="#000"/></svg>
    <svg width="30" height="20"><path d="M2 2.500c2-2 6-2 8 0v5c-2 2-6 2-8 0zM2 3c2 2 6 2 8 0" fill="#aaa" stroke="#000"/><path d="M.5 12.500h29v6H.5z" fill="#00f" stroke="#000"/><path d="M27 13h2v5h-2z" fill="#ccc"/></svg>
    <svg width="30" height="20"><path d="M1.500 1.500h3v2h-3zM6.500 1.500h3v2h-3zM12.500 1.500h3v2h-3zM2.500 7v-2l5-2 6 2v2M8 4v5M1.500 7.500h2M12.500 7.500h3M6.500 9h3" fill="none" stroke="#000"/><path d="M.5 12.500h29v6H.5z" fill="#d0d0d0" stroke="#000"/></svg>
    <span class="mem">718 MB</span>
  </footer>

  <footer class="taskbar">
    <button aria-label="Start"><svg width="16" height="16"><path d="M0 2l7-1v6H0zM8 1l8-1v7H8zM0 8h7v7l-7-1zM8 8h8v8l-8-1z" fill="#fff"/></svg></button>
    <button aria-label="Task view"><svg width="22" height="16"><path d="M5.500 1.500h10v13h-10zM3 3.500H1.500v9H3M18 3.500h1.500v9H18" fill="none" stroke="#fff"/></svg></button>
    <button class="run" aria-label="Internet Explorer"><svg width="24" height="24" viewBox="0 0 24 24"><path d="M20 14H8c0 5 7 5 8 2h4c-3 8-16 6-16-3 0-10 16-10 16 1zM8 11h8c0-5-8-5-8 0z" fill="#49c3f5"/><path d="M3 22C0 18 8 4 20 1c3 0 2 3 1 5 0-3-1-4-4-2C9 8 2 17 3 22z" fill="#f6c733"/></svg></button>
    <button class="run" aria-label="Outlook"><svg width="24" height="24" viewBox="0 0 24 24"><path d="M12 6h11v12H12z" fill="#fff" stroke="#0072c6"/><path d="M13 8l5 5 5-5" fill="none" stroke="#0072c6"/><path d="M0 3l13-3v24L0 21z" fill="#0072c6"/><circle cx="6.500" cy="12" r="3" fill="none" stroke="#fff" stroke-width="2"/></svg></button>
    <button aria-label="Excel"><svg width="24" height="24" viewBox="0 0 24 24"><path d="M12 4h10v16H12z" fill="#fff" stroke="#207245"/><path d="M14 7h7M14 10h7M14 13h7M14 16h7" stroke="#207245"/><path d="M0 3l13-3v24L0 21z" fill="#207245"/><path d="M4 8l5 8M9 8l-5 8" stroke="#fff" stroke-width="2"/></svg></button>
    <button aria-label="Word"><svg width="24" height="24" viewBox="0 0 24 24"><path d="M12 4h10v16H12z" fill="#fff" stroke="#2a5699"/><path d="M14 7h7M14 10h7M14 13h7M14 16h7" stroke="#2a5699"/><path d="M0 3l13-3v24L0 21z" fill="#2a5699"/><path d="M3 8l2 8 2-7 2 7 2-8" stroke="#fff" fill="none" stroke-width="1.500"/></svg></button>
    <button class="run" aria-label="Skype"><svg width="26" height="26" viewBox="0 0 26 26"><circle cx="9" cy="8" r="8" fill="#00aff0"/><circle cx="14" cy="14" r="8" fill="#00aff0"/><circle cx="11.500" cy="11" r="8" fill="#00aff0"/><path d="M16 7c-2-3-9-2-8 1 1 4 9 2 8 6-1 3-8 3-9 0" fill="none" stroke="#fff" stroke-width="2.500"/><circle cx="20" cy="20" r="6" fill="#6fae1a" stroke="#fff"/><path d="M17 20l2 2 4-4" fill="none" stroke="#fff" stroke-width="1.500"/></svg></button>
    <button class="run" aria-label="File Explorer"><svg width="22" height="20"><path d="M0 1h8l2 3h11v15H0z" fill="#f5ca52"/><path d="M0 5h21v14H0z" fill="#fde294"/><path d="M5 19v-8h12v8h-4v-4H9v4z" fill="#3fa9e0"/></svg></button>
    <button aria-label="OneDrive folder"><svg width="22" height="22"><path d="M1 1h8l3 4v15H1z" fill="#fde294"/><path d="M1 1h4v20z" fill="#f5ca52"/><path d="M7 20c-2-4 1-6 3-5 1-5 8-5 8 0 4 0 4 5 1 5z" fill="#0a6ccf" stroke="#fff" stroke-width=".5"/></svg></button>
    <button aria-label="Cisco"><svg width="24" height="24"><circle cx="12" cy="12" r="11" fill="#55595c" stroke="#777"/><path d="M12 5a7 7 0 1 0 7 8M12 9a3.500 3.500 0 1 0 3 5" fill="none" stroke="#fff" stroke-width="2"/></svg></button>
    <button aria-label="Snipping Tool"><svg width="24" height="24"><ellipse cx="12" cy="9" rx="11" ry="6" fill="#f5f5f5" stroke="#d33" stroke-width="2" transform="rotate(-25 12 9)"/><path d="M4 12c3 5 10 4 12 2" stroke="#bbb" stroke-width="2" fill="none"/><path d="M12 10l4 8M17 10l-3 8" stroke="#999"/><circle cx="13" cy="20" r="2.500" fill="none" stroke="#2a8ad8" stroke-width="2"/><circle cx="19" cy="19" r="2.500" fill="none" stroke="#2a8ad8" stroke-width="2"/></svg></button>
    <button class="run" aria-label="Chrome"><svg width="24" height="24" viewBox="-12 -12 24 24"><circle r="11" fill="#fc3"/><path d="M0 0L-9.500-5.500A11 11 0 0 1 9.500-5.500z" fill="#ea4335"/><path d="M0 0l-9.500-5.500A11 11 0 0 0 0 11l4-7z" fill="#34a853"/><circle r="5" fill="#4285f4" stroke="#fff" stroke-width="1.500"/></svg></button>
    <button class="run" aria-label="Sticky Notes"><svg width="18" height="20"><path d="M0 1h18v18H0z" fill="#fff"/><path d="M9 19v-9h9z" fill="#111"/></svg></button>
    <button class="run" aria-label="Revit"><span class="tile tr">R</span></button>
    <button class="run" aria-label="AutoCAD"><span class="tile ta">A</span></button>
    <button aria-label="BIM 360 Glue"><span class="tile tb">B</span></button>
    <button class="run current" aria-label="Navisworks"><span class="tile tn">N</span></button>
    <button class="run" aria-label="Calculator"><svg width="18" height="24"><path d="M0 0h18v24H0z" fill="#fff"/><path d="M3 3h12v4H3z" fill="#000"/><path d="M3 11h12M3 15h12M3 19h12" stroke="#000" stroke-width="2" stroke-dasharray="3 1.500"/></svg></button>
    <time class="clock">3:29 PM<br>2/13/2019</time>
  </footer>
</div>
</body>
</html>
```
FILE: styles.css
```css
* { box-sizing: border-box; }
body { margin: 0; background: #a0a0a0; font-family: "Noto Sans", "Open Sans", sans-serif; font-size: 11px; line-height: 15px; color: #111; }
h1, h2, p, ul, dl, dd { margin: 0; padding: 0; font-weight: normal; font-size: inherit; }
ul { list-style: none; }
a { color: inherit; text-decoration: none; }
fieldset { border: 0; margin: 0; padding: 0; min-width: 0; }
legend { padding: 0; }
button, input, select { font: inherit; color: inherit; border-radius: 0; }
button { padding: 0; border: 0; background: none; }
svg { flex: none; display: block; }
table { border-collapse: separate; border-spacing: 0; table-layout: fixed; }
th { font-weight: normal; padding: 0; }
.defs { position: absolute; width: 0; height: 0; }
.app { position: relative; display: flex; flex-direction: column; min-height: 100vh; }

.tri-down, .tri-up, .tri-right { display: inline-block; width: 0; height: 0; border: 4px solid transparent; flex: none; }
.tri-down { border-top-color: #444; border-bottom-width: 0; }
.tri-down.small { border-width: 3px 3px 0; }
.tri-down.dim { border-width: 4px 3px 0; border-top-color: #555; }
.tri-up { border-bottom-color: #222; border-top-width: 0; }
.tri-right { border-left-color: #333; border-right-width: 0; }

/* title bar */
.titlebar { height: 24px; background: #fff; display: grid; grid-template-columns: 1297px 460px 1fr; }
.window-title { padding-left: 667px; line-height: 24px; font-size: 11px; }
.infocenter { height: 23px; display: flex; align-items: center; gap: 7px; padding-left: 4px; background: linear-gradient(#5c5c5c, #a8a8a8 12%, #6a6a6a); font-size: 12px; }
.keyword { width: 181px; height: 22px; border: 2px solid #000; border-width: 1px 2px; padding: 0 4px; background: #fff; font-style: italic; margin: 0 -3px 0 -1px; font-size: 11px; }
.keyword::placeholder { color: #777; }
.infocenter .rule { width: 1px; height: 20px; background: #999; margin-right: 2px; }
.user { width: 79px; margin-left: -2px; }
.cart { margin-left: 2px; }
.help { width: 17px; height: 17px; border-radius: 50%; background: #fff; border: 1px solid #333; color: #2348b0; font-weight: bold; line-height: 15px; }
.window-buttons { display: flex; justify-content: flex-end; padding: 0 19px 2px 0; gap: 34px; align-items: center; }

.app-button { position: absolute; left: 0; top: 0; width: 41px; height: 41px; display: flex; align-items: center; gap: 1px; padding: 0 0 9px 4px; border: 1px solid #000; background: linear-gradient(#b5b5b5, #7a7a7a); }

/* ribbon tabs */
.tabs { height: 20px; background: #404040; color: #f2f2f2; font-size: 12px; display: flex; align-items: flex-end; gap: 3px; padding-left: 46px; }
.tabs a { height: 17px; line-height: 16px; padding: 0 8px; }
.tabs .active { background: linear-gradient(#ccc, #fff); color: #222; border-radius: 2px 2px 0 0; }
.tabs .context { height: 16px; margin-bottom: 1px; border: 1px solid #5f2; background: #a8c89c; color: #1c3c1c; line-height: 14px; }
.collapse { margin: 0 0 5px 20px; }

/* ribbon */
.ribbon { display: flex; height: 109px; padding: 1px 1px 3px 2px; background: #fff; border-bottom: 1px solid #888; color: #333; font-size: 12px; }
.group { display: flex; flex-direction: column; justify-content: space-between; border-right: 2px solid #a8a8a8; padding: 0 1px; }
.g-measure { width: 267px; }
.g-redline { width: 264px; }
.g-tags { width: 140px; }
.g-comments { width: 220px; border-right: 0; }
.ribbon-fill { flex: 1; background: linear-gradient(#d6d6d6, #8a8a8a); }
.tools { display: flex; padding-top: 12px; }
.g-measure .tools { padding-left: 5px; }
.g-comments .tools { padding-left: 2px; }
.tool { display: flex; flex-direction: column; align-items: center; line-height: 15px; color: #333; }
.tool span { white-space: nowrap; margin-top: 3px; }
.tool:disabled { color: #bbb; }
.tool .small { margin-top: 3px; }
.caption { height: 18px; background: #eee; border-top: 1px solid #ccc; display: flex; justify-content: center; align-items: center; gap: 7px; position: relative; }
.launcher { position: absolute; right: 4px; bottom: 5px; }
.w27 { width: 27px; } .w32 { width: 32px; } .w35 { width: 35px; } .w42 { width: 42px; } .w48 { width: 48px; } .w49 { width: 49px; } .w54 { width: 54px; } .w56 { width: 56px; } .w62 { width: 62px; } .w64 { width: 64px; } .w65 { width: 65px; } .w71 { width: 71px; } .w75 { width: 75px; } .w78 { width: 78px; }
.redline-form { display: grid; grid-template-columns: 78px 56px; grid-auto-rows: 22px; row-gap: 2px; padding-top: 9px; align-items: center; }
.redline-form label { display: flex; gap: 4px; align-items: center; font-size: 11px; }
.redline-form .thick { align-self: start; }
.swatch, .spin { display: flex; align-items: center; justify-content: space-between; border: 1px solid #bbb; background: #fff; height: 22px; }
.swatch { padding: 0 4px; background: #f4f4f4; }
.swatch b { width: 15px; height: 15px; background: red; border: 1px solid #000; }
.spin input { width: 100%; min-width: 0; border: 0; padding: 0 3px; background: none; font-size: 11px; }
.spin-arrows { display: flex; flex-direction: column; justify-content: space-around; align-items: center; width: 12px; flex: none; height: 20px; border-left: 1px solid #ccc; background: #f0f0f0; }
.spin-arrows i { border-left-width: 3px; border-right-width: 3px; }
.tag-form { display: grid; grid-template-columns: repeat(4, 24px); grid-auto-rows: 22px; row-gap: 2px; padding-top: 9px; }
.tagnum { grid-column: span 3; }
.tag-form button { border: 1px solid #ccc; display: flex; align-items: center; justify-content: center; }
.comment-form { display: flex; flex-direction: column; gap: 3px; padding-top: 10px; }
.find { display: flex; align-items: center; gap: 4px; height: 20px; padding-left: 4px; }
.quick { display: flex; align-items: center; width: 150px; height: 22px; border: 1px solid #bbb; }
.quick input { flex: 1; min-width: 0; border: 0; background: none; }
.abc { font-size: 6px; font-weight: bold; }

/* docking area */
.workspace { flex: 1; display: grid; grid-template-columns: 208px minmax(0, 1fr) 319px; gap: 4px; padding: 2px 3px 0; }
.dock { display: flex; flex-direction: column; gap: 4px; min-width: 0; }
.panel { display: flex; flex-direction: column; border: 1px solid #5e5e5e; background: #f0f0f0; min-width: 0; min-height: 0; }
.panel-head { flex: none; height: 22px; display: flex; align-items: center; background: linear-gradient(#b8b8b8, #a8a8a8 60%, #8a8a8a); border-bottom: 1px solid #5e5e5e; padding: 0 7px 0 5px; color: #555; }
.panel-head h2 { flex: 1; }
.panel-head .pin { width: 12px; height: 12px; margin-right: 9px; }
.panel-head button svg { width: 9px; height: 9px; }
.panel-body { flex: 1; min-height: 0; }
.selection { flex: 441 1 0; }
.clash { flex: 414 1 0; }
.select { position: relative; display: block; height: 21px; }
.select select { appearance: none; display: block; width: 100%; height: 100%; padding: 0 3px; border: 1px solid #adadad; background: #e1e1e1; }
.select::after { content: ""; position: absolute; right: 7px; top: 5px; width: 6px; height: 6px; border: solid #555; border-width: 0 1px 1px 0; transform: rotate(45deg); }
.selection-body { display: flex; flex-direction: column; gap: 4px; padding: 4px 10px 9px; }
.tree { flex: 1; display: flex; flex-direction: column; background: #fff; border: 1px solid #828282; border-width: 1px 1px 0 2px; border-right-color: #ddd; padding-bottom: 6px; }
.tree ul { flex: 1; }
.tree li, .clash-tree li { display: flex; align-items: center; height: 16px; font-weight: bold; gap: 2px; }
.tree li { padding-left: 8px; overflow: hidden; }
.plus { position: relative; width: 9px; height: 9px; border: 1px solid #888; background: #fff; flex: none; }
.plus::before, .plus::after { content: ""; position: absolute; background: #224; }
.plus::before { left: 1px; top: 3px; width: 5px; height: 1px; }
.plus::after { left: 3px; top: 1px; width: 1px; height: 5px; }
.plus.on { background: #0078d7; border-color: #000; }
.plus.on::before, .plus.on::after { background: #fff; }
.picked .node { background: #0078d7; color: #fff; outline: 1px dashed #000; outline-offset: -1px; line-height: 14px; padding-right: 4px; }
.node { white-space: nowrap; }
.hscroll { display: flex; align-items: center; height: 15px; background: #f0f0f0; color: #444; padding: 0 4px; gap: 5px; }
.hscroll svg { width: 8px; height: 10px; }
.hscroll .track { flex: 1; height: 100%; display: flex; }
.hscroll b { background: #cdcdcd; height: 100%; }
.thumb-tree { width: 94%; }
.thumb-clash { width: 29%; }
.off { color: #bbb; height: 17px; border-top: 1px solid #fff; }

.clash-body { display: grid; grid-template: minmax(0, 1fr) 16px / minmax(0, 1fr) 16px; color: #666; background: linear-gradient(#f8f8f8, #e6e6e6); }
.clash-view { overflow: hidden; display: flex; flex-direction: column; border-bottom: 1px solid #fff; }
.notice { flex: none; display: flex; align-items: center; gap: 10px; height: 37px; padding: 9px 0 0 9px; border-bottom: 1px solid #bbb; font-size: 14px; white-space: nowrap; }
.vscroll { display: flex; flex-direction: column; align-items: center; justify-content: space-between; background: #f0f0f0; color: #444; padding: 4px 0; }
.vscroll svg { width: 8px; height: 10px; }
.vscroll .up { transform: rotate(90deg); }
.vscroll .down { transform: rotate(-90deg); }
.vscroll .track { flex: 1; width: 15px; padding-top: 3px; }
.vscroll .track b { display: block; height: 62%; background: #cdcdcd; }
.boxtabs { flex: none; display: flex; align-items: flex-end; border-bottom: 1px solid #808080; color: #666; }
.boxtabs a { flex: none; text-align: center; border: 1px solid #666; border-bottom: 0; margin-right: -1px; background: #f4f4f4; }
.clash-tabs { height: 34px; padding-left: 15px; }
.clash-tabs a { height: 25px; line-height: 26px; }
.clash-tabs .active { height: 28px; margin-bottom: -1px; }
.clash-tabs .cut { text-align: left; padding-left: 5px; }
.selection-a { flex: 1; min-height: 0; border: 1px solid #808080; border-right: 0; border-bottom: 0; border-radius: 4px 0 0 0; margin: 10px 0 0 11px; padding: 2px 0 0 9px; }
.selection-a legend { padding: 0 4px; margin-left: -6px; }
.inner { border: 1px solid #aaa; border-width: 1px 0 0 1px; padding: 4px 0 0 10px; height: 100%; display: flex; flex-direction: column; gap: 4px; }
.bar { height: 21px; flex: none; line-height: 19px; background: #ccc; border: 1px solid #bbb; border-right: 0; padding-left: 3px; }
.clash-tree { flex: 1; min-height: 200px; border: 1px solid #666; border-width: 1px 0 0 2px; background: #f0f0f0; }
.clash-tree li { padding-left: 8px; }

.center { display: grid; grid-template: minmax(0, 1fr) 217px / 259px minmax(0, 1fr); gap: 4px; min-width: 0; }
.timeliner { grid-column: span 2; }
.measure { border-width: 1px 2px 2px; }
.measure .panel-head { height: 23px; border-bottom-width: 2px; }
.measure-body { padding: 11px 13px 0 11px; display: flex; flex-direction: column; gap: 8px; }
.row3 { display: grid; grid-template-columns: 71px 71px 72px; gap: 8px; }
.row3 input, .distance input { height: 23px; border: 1px solid #7a7a7a; box-shadow: inset 0 0 0 1px #fff; background: #f0f0f0; padding: 0 5px 3px; min-width: 0; width: 100%; }
.row3.first legend { margin-bottom: 5px; }
.distance { margin-top: 3px; }
.distance input { display: block; margin-top: 2px; }
.push { height: 21px; border: 1px solid #adadad; background: #e1e1e1; }
.measure .push { width: 79px; align-self: flex-end; margin-top: 12px; }

/* 3D view */
.viewport { position: relative; background: #000; overflow: hidden; min-height: 560px; }
.scene { position: absolute; inset: 0; width: 100%; height: 100%; }
.cube-text { font-size: 11px; font-weight: bold; fill: #67719f; }
.reading { position: absolute; left: 56px; top: 491px; width: 75px; background: #fff; font-size: 12px; color: #e01010; }
.total { background: #f90; color: #fff; font-size: 18px; line-height: 26px; text-align: center; }
.reading dd { display: flex; line-height: 20px; }
.reading b { width: 18px; background: #f00; color: #fff; text-align: center; font-weight: normal; margin-right: 5px; }
.reading .green { color: #0b0; }
.reading .y { background: #0c0; }
.tooltip { position: absolute; left: 29px; top: 585px; height: 24px; line-height: 24px; padding: 0 5px; background: #555; border: 1px solid #777; color: #fff; font-size: 13px; white-space: nowrap; }
.navbar { position: absolute; right: 2px; top: 155px; width: 54px; height: 284px; background: #262626; border-radius: 4px; }

.dialog { position: absolute; right: 25px; top: 102px; width: 384px; height: 426px; border: 1px solid #0078d7; background: #f0f0f0; }
.dialog-head { height: 30px; background: #fff; display: flex; align-items: center; justify-content: space-between; padding: 0 9px 0 8px; font-size: 11px; }
.dialog-body { padding: 7px 10px 0 8px; display: flex; flex-direction: column; }
.box { border: 1px solid #dcdcdc; padding: 0 7px 0 6px; }
.box legend { padding: 0 2px 0 1px; margin-left: 0; }
.units { display: grid; grid-template-columns: 167px 1fr; height: 50px; }
.units label { padding-top: 5px; }
.units .select { margin-top: 2px; }
.origin { height: 89px; margin-top: 7px; }
.origin .line { line-height: 15px; padding: 9px 0 2px; }
.trio { display: grid; grid-template-columns: 111px 98px 115px; gap: 13px; }
.trio input, .angle input { height: 20px; border: 1px solid #7a7a7a; background: #fff; padding: 0 5px; min-width: 0; }
.check { display: flex; align-items: center; gap: 2px; height: 24px; }
.check input { appearance: none; width: 13px; height: 13px; border: 1px solid #333; background: #fff; margin: 0; }
.rotation { height: 81px; margin-top: 9px; }
.angle { display: flex; gap: 1px; height: 20px; margin: 10px 0 4px; line-height: 14px; }
.angle input { width: 111px; }
.scale { height: 57px; margin-top: 8px; padding-top: 10px; }
.dialog-actions { display: flex; justify-content: flex-end; gap: 9px; margin: 55px 1px 0 0; }
.dialog-actions .push { width: 73px; }
.dialog-actions .primary { border: 2px solid #0078d7; }
.ink { position: absolute; left: -1px; top: -1px; pointer-events: none; }

/* timeliner */
.timeliner-body { background: linear-gradient(#f0f0f0 20%, #f4f4f4 24%, #e0e0e0); display: flex; flex-direction: column; }
.tl-tabs { height: 33px; padding-left: 10px; }
.tl-tabs a { height: 21px; line-height: 22px; }
.tl-tabs .active { height: 23px; margin-bottom: -1px; }
.toolbar { display: flex; align-items: center; gap: 4px; padding: 10px; }
.btns { display: flex; height: 26px; border: 1px solid #bbb; border-radius: 3px; }
.btns button { display: flex; align-items: center; justify-content: center; gap: 1px; color: #b5b5b5; border-left: 1px solid #999; white-space: nowrap; }
.btns button:first-child { border-left: 0; }
.btns svg { width: 20px; height: 16px; fill: #ececec; stroke: #b4b4b4; }
.btns .tri-down { border-top-color: #c4c4c4; }
.btns .lit { background: #f4f4f8; box-shadow: inset 0 1px #b4b4cc; }
.lead { margin-left: 29px; }
.zoom { display: flex; align-items: center; gap: 14px; margin-left: 10px; color: #777; }
.zoom input { appearance: none; width: 110px; height: 3px; margin: 0 0 6px; background: #e2e8e6; border: 1px solid #ccd6d4; }
.zoom input::-webkit-slider-thumb { appearance: none; width: 11px; height: 18px; background: #f2f2f2; border: 1px solid #ccc; }
.end { margin-left: auto; }
.split { display: grid; grid-template-columns: 632px minmax(0, 1fr); gap: 2px; padding: 0 10px; height: 104px; }
.pane { display: flex; flex-direction: column; border: 1px solid #a8a8a8; background: #f0f0f0; min-width: 0; overflow: hidden; }
.void { flex: 1; background: #aaa; }
.tasks { background: #aaa; }
.tasks th { height: 38px; border-right: 1px solid #999; border-bottom: 1px solid #999; border-top: 1px solid #fff; background: #f0f0f0; text-align: center; white-space: nowrap; }
.tasks table { width: 627px; }
.gantt table { width: 100%; }
.gantt th { height: 19px; border-left: 1px solid #999; border-bottom: 1px solid #999; border-top: 1px solid #fff; line-height: 16px; }
.gantt th:first-child { border-left: 0; }
.months th { text-align: left; padding-left: 4px; }
.gantt .last { padding-left: 34px; }
.c16 { width: 16px; } .c41 { width: 41px; } .c45 { width: 45px; } .c46 { width: 46px; } .c49 { width: 49px; } .c60 { width: 60px; } .c63 { width: 63px; } .c64 { width: 64px; } .c66 { width: 66px; } .c72 { width: 72px; } .c74 { width: 74px; } .c80 { width: 80px; } .c81 { width: 81px; } .c100 { width: 100px; } .c119 { width: 119px; } .c168 { width: 168px; }

/* right dock */
.properties { flex: 422 1 0; }
.saved { flex: 433 1 0; }
.properties-body { display: flex; flex-direction: column; padding: 7px 8px 8px 6px; }
.proptabs { display: flex; align-items: flex-end; height: 21px; }
.proptabs a { height: 19px; line-height: 18px; padding: 0 2px 0 3px; border: 1px solid #d9d9d9; border-bottom: 0; margin-left: -1px; }
.proptabs .active { height: 21px; padding: 0 14px 0 6px; background: #fff; margin: 0; }
.sheet { flex: 1; border: 1px solid #dcdcdc; background: #fff; padding: 3px 1px 2px 3px; display: flex; }
.list { flex: 1; border: 1px solid #828790; font-family: "Liberation Sans", Arial, sans-serif; font-size: 11px; }
.list table { width: 100%; }
.list th { height: 24px; text-align: left; border-right: 1px solid #e0e0e0; }
.list th:last-child { border: 0; }
.list th, .list td { padding: 0 0 0 7px; white-space: nowrap; }
.list td { height: 17px; }
.list tbody::before { content: ""; display: block; height: 1px; }
.saved-body { padding: 4px; display: flex; }
.views { flex: 1; border: 1px solid #666; background: #fff; }
.views li { display: flex; align-items: center; height: 16px; padding-left: 7px; }
.dots { width: 6px; border-top: 1px dotted #888; }
.views svg { margin-right: 6px; }

/* status and task bars */
.statusbar { height: 26px; display: flex; align-items: center; justify-content: flex-end; gap: 5px; padding-right: 7px; }
.statusbar .pages { width: 50px; text-align: center; padding-bottom: 2px; font-size: 12px; }
.statusbar .rule { width: 1px; height: 18px; background: #eee; margin: 0 8px 0 5px; }
.statusbar .mem { font-size: 10px; margin-left: 1px; color: #222; }
.taskbar { height: 39px; display: flex; background: linear-gradient(90deg, #14110f, #0e0a09 30%, #1c1410 60%, #0f0e10); }
.taskbar button { width: 49px; display: flex; align-items: center; justify-content: center; border-bottom: 2px solid transparent; }
.taskbar .run { background: linear-gradient(#76b9ed, #76b9ed) center bottom / 40px 2px no-repeat border-box; }
.taskbar .current { background: linear-gradient(#76b9ed, #76b9ed) center bottom / 48px 2px no-repeat border-box, #444; }
.tile { width: 24px; height: 24px; line-height: 24px; font-size: 20px; font-weight: bold; }
.tr { background: #dce8f6; color: #1f5fae; }
.ta { background: #f8e6e4; color: #b01c24; }
.tb { background: #dcf0fa; color: #1470b0; }
.tn { background: #dff3e6; color: #108046; }
.clock { margin-left: auto; width: 64px; text-align: center; color: #fff; font-size: 11px; line-height: 19px; }
```
